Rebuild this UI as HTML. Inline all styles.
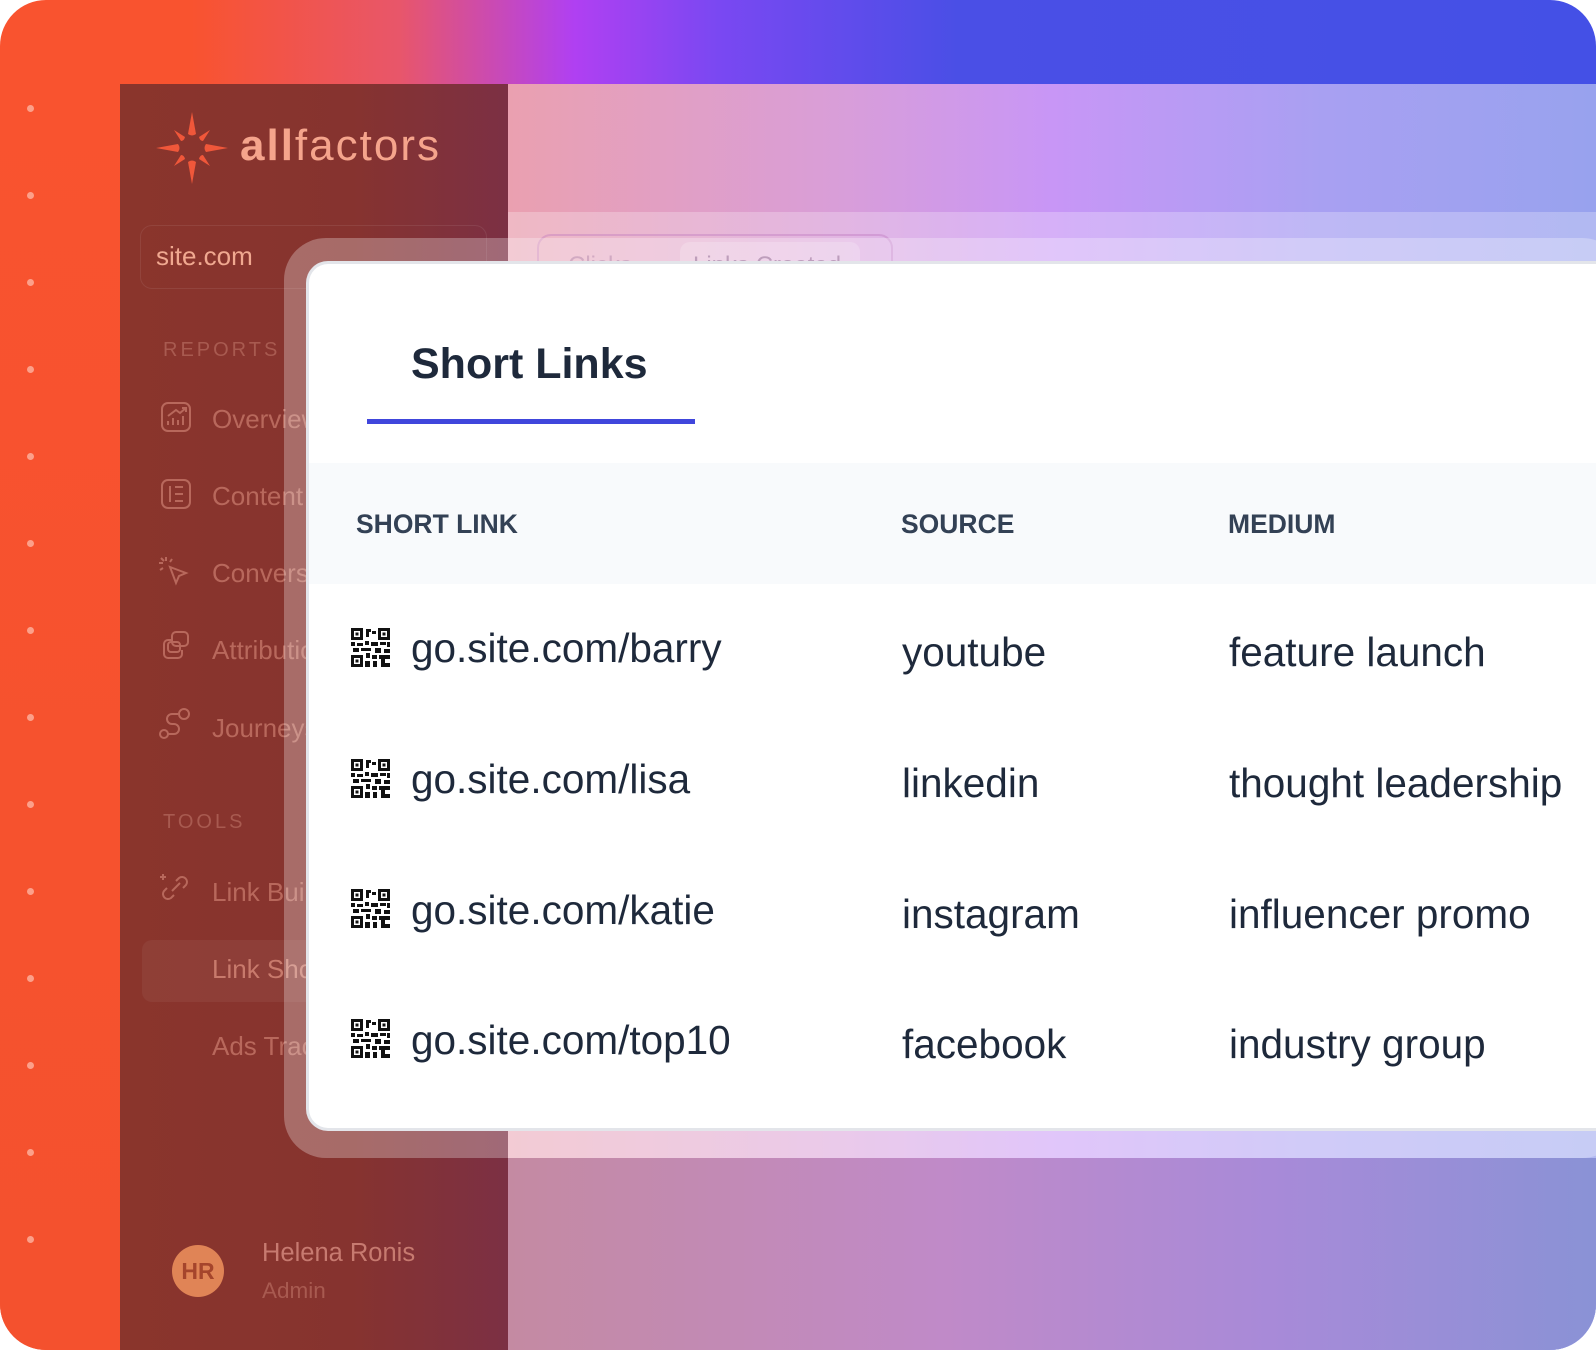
<!DOCTYPE html>
<html><head><meta charset="utf-8"><style>
*{margin:0;padding:0;box-sizing:border-box}
html,body{width:1596px;height:1350px;overflow:hidden;background:#fff}
body{font-family:"Liberation Sans",sans-serif;position:relative}
.outer{position:absolute;left:0;top:0;width:1596px;height:1350px;border-radius:46px;overflow:hidden;
background:linear-gradient(90deg,#f9532f 0%,#f9532f 12%,#e8566a 25%,#b040f2 36%,#7a48f2 45%,#4a4fe6 60%,#4450e6 100%)}
.leftstrip{position:absolute;left:0;top:84px;width:120px;height:1266px;background:linear-gradient(180deg,#f9532f,#f4512e)}
.dot{position:absolute;left:27px;width:7px;height:7px;border-radius:50%;background:#fca08a}
.main{position:absolute;left:508px;top:84px;width:1088px;height:1266px;
background:linear-gradient(90deg,#eaa0b0 0%,#d99ed8 30%,#c896f6 50%,#a8a0f2 75%,#98a2ee 100%)}
.main .band{position:absolute;left:0;top:128px;width:100%;height:1138px;background:rgba(255,255,255,0.25)}
.main .bot{position:absolute;left:0;top:1074px;width:100%;height:192px;
background:linear-gradient(90deg,#c48aa2 0%,#c08ac8 40%,#a88ad8 70%,#8a92d6 100%)}
.side{position:absolute;left:120px;top:84px;width:388px;height:1266px;
background:linear-gradient(90deg,#8a352c 0%,#86332f 60%,#7c3044 100%)}
.side .t{position:absolute;color:#b8685c;font-size:26px}
.frame{position:absolute;left:284px;top:238px;width:1340px;height:920px;border-radius:42px;background:rgba(255,255,255,0.28)}
.card{position:absolute;left:306px;top:261px;width:1320px;height:870px;border-radius:22px;background:#fff;border:3px solid #e3e5ea;border-right:none;overflow:hidden}
.c{position:absolute;color:#1e293b;white-space:nowrap}
.h{font-size:26.5px;color:#334155;font-weight:bold;top:-2px}
.r{font-size:40.5px}
</style></head><body>
<div class="outer">
 <div class="leftstrip"></div>
 <div class="dot" style="top:105px"></div><div class="dot" style="top:192px"></div><div class="dot" style="top:279px"></div><div class="dot" style="top:366px"></div><div class="dot" style="top:453px"></div><div class="dot" style="top:540px"></div><div class="dot" style="top:627px"></div><div class="dot" style="top:714px"></div><div class="dot" style="top:801px"></div><div class="dot" style="top:888px"></div><div class="dot" style="top:975px"></div><div class="dot" style="top:1062px"></div><div class="dot" style="top:1149px"></div><div class="dot" style="top:1236px"></div>
 <div class="main"><div class="band"></div><div class="bot"></div>
  <div style="position:absolute;left:29px;top:150px;width:356px;height:60px;border:2px solid rgba(190,120,190,0.4);border-radius:14px"></div>
  <div style="position:absolute;left:60px;top:168px;font-size:24px;color:rgba(150,90,140,0.5)">Clicks</div>
  <div style="position:absolute;left:172px;top:158px;width:180px;height:46px;border-radius:10px;background:rgba(255,255,255,0.2)"></div>
  <div style="position:absolute;left:185px;top:168px;font-size:24px;color:rgba(120,70,120,0.6)">Links Created</div>
 </div>
 <div class="side">
  <svg style="position:absolute;left:34px;top:26px" width="76" height="76" viewBox="0 0 76 76"><g fill="#f0573a">
   <path d="M38 2 L42 24 Q38 27 34 24Z"/><path d="M38 74 L42 52 Q38 49 34 52Z"/><path d="M2 38 L24 34 Q27 38 24 42Z"/><path d="M74 38 L52 34 Q49 38 52 42Z"/>
   <path d="M20 20 L31 27 Q30 31 27 31Z"/><path d="M56 20 L45 27 Q46 31 49 31Z"/><path d="M20 56 L31 49 Q30 45 27 45Z"/><path d="M56 56 L45 49 Q46 45 49 45Z"/></g></svg>
  <div style="position:absolute;left:120px;top:37px;font-size:44px;color:#f5a48c;letter-spacing:2px"><b>all</b>factors</div>
  <div style="position:absolute;left:20px;top:141px;width:347px;height:64px;border:1px solid rgba(255,255,255,0.08);border-radius:12px"></div>
  <div class="t" style="left:36px;top:157px;color:#f0a890">site.com</div>
  <div class="t" style="left:43px;top:255px;font-size:20px;letter-spacing:3px;color:#a85a50">REPORTS</div>
  <svg style="position:absolute;left:40px;top:317px" width="32" height="32" viewBox="0 0 32 32" fill="none" stroke="#b8685c" stroke-width="2"><rect x="2" y="2" width="28" height="28" rx="6"/><path d="M8 24v-4M13 24v-7M18 24v-5M23 24v-9M8 15l8-6 4 3 6-5M22 7h4v4"/></svg>
  <div class="t" style="left:92px;top:320px">Overview</div>
  <svg style="position:absolute;left:40px;top:394px" width="32" height="32" viewBox="0 0 32 32" fill="none" stroke="#b8685c" stroke-width="2"><rect x="2" y="2" width="28" height="28" rx="6"/><path d="M10 8v16M15 9h8M15 16h8M15 23h8"/></svg>
  <div class="t" style="left:92px;top:397px">Content</div>
  <svg style="position:absolute;left:36px;top:469px" width="36" height="36" viewBox="0 0 36 36" fill="none" stroke="#b8685c" stroke-width="2"><path d="M14 14l16 6-7 3-3 7z"/><path d="M10 4v4M3 10h4M5 5l3 3M16 6l-2 3M4 17l3-2"/></svg>
  <div class="t" style="left:92px;top:474px">Conversions</div>
  <svg style="position:absolute;left:40px;top:546px" width="32" height="32" viewBox="0 0 32 32" fill="none" stroke="#b8685c" stroke-width="2"><rect x="12" y="2" width="16" height="14" rx="4"/><path d="M12 10H8a4 4 0 0 0-4 4v10a4 4 0 0 0 4 4h10a4 4 0 0 0 4-4v-4"/><rect x="8" y="12" width="12" height="10" rx="3"/></svg>
  <div class="t" style="left:92px;top:551px">Attribution</div>
  <svg style="position:absolute;left:38px;top:622px" width="34" height="34" viewBox="0 0 34 34" fill="none" stroke="#b8685c" stroke-width="2"><circle cx="6" cy="28" r="4"/><circle cx="26" cy="8" r="5"/><path d="M10 28h6a5 5 0 0 0 0-10h-2a5 5 0 0 1 0-10h6"/></svg>
  <div class="t" style="left:92px;top:629px">Journeys</div>
  <div class="t" style="left:43px;top:727px;font-size:20px;letter-spacing:3px;color:#a85a50">TOOLS</div>
  <svg style="position:absolute;left:38px;top:787px" width="34" height="34" viewBox="0 0 34 34" fill="none" stroke="#b8685c" stroke-width="2"><path d="M2 6h6M5 3v6"/><path d="M14 20l8-8"/><path d="M18 10l3-3a5 5 0 0 1 7 7l-3 3"/><path d="M16 24l-3 3a5 5 0 0 1-7-7l3-3"/></svg>
  <div class="t" style="left:92px;top:793px">Link Builder</div>
  <div style="position:absolute;left:22px;top:856px;width:250px;height:62px;border-radius:10px;background:rgba(255,255,255,0.05)"></div>
  <div class="t" style="left:92px;top:870px;color:#c87a6c">Link Shortener</div>
  <div class="t" style="left:92px;top:947px">Ads Tracking</div>
  <div style="position:absolute;left:52px;top:1161px;width:52px;height:52px;border-radius:50%;background:#e08456;color:#a5452c;font-size:23px;font-weight:bold;text-align:center;line-height:52px">HR</div>
  <div class="t" style="left:142px;top:1155px;font-size:25.5px;color:#c77a70">Helena Ronis</div>
  <div class="t" style="left:142px;top:1194px;font-size:22.5px;color:#a85a50">Admin</div>
 </div>
 <div class="frame"></div>
 <div class="card">
  <div class="c" style="left:102px;top:76px;font-size:43px;font-weight:bold;color:#1e293b">Short Links</div>
  <div style="position:absolute;left:58px;top:155px;width:328px;height:5px;background:#4046dc"></div>
  <div style="position:absolute;left:0;top:199px;width:100%;height:121px;background:#f8fafc">
   <div class="c h" style="left:47px;top:46px">SHORT LINK</div>
   <div class="c h" style="left:592px;top:46px">SOURCE</div>
   <div class="c h" style="left:919px;top:46px">MEDIUM</div>
  </div>
 </div>
</div>
<svg width="0" height="0" style="position:absolute"><defs><g id="qr" fill="#111">
<path d="M0 0h12v12H0zM3 3v6h6V3zM4.5 4.5h3v3h-3z" fill-rule="evenodd"/>
<path d="M27 0h12v12H27zM30 3v6h6V3zM31.5 4.5h3v3h-3z" fill-rule="evenodd"/>
<path d="M0 27h12v12H0zM3 30v6h6v-6zM4.5 31.5h3v3h-3z" fill-rule="evenodd"/>
<path d="M15 1h5v3h-2v5h-3zM21 3h4v3h-4z"/>
<path d="M0 14h4v4H0zM6 15h6v3H6zM14 13h4v4h-4zM20 14h7v4h-7zM29 14h6v3h-6zM36 14h3v5h-3z"/>
<path d="M2 20h6v4H2zM10 20h10v3H10zM24 20h6v5h-6zM33 21h6v4h-6z"/>
<path d="M15 25h4v5h-4zM21 27h5v4h-5zM28 27h11v4H28zM14 33h5v6h-5zM22 33h4v6h-4zM30 31h4v8h-4zM34 35h5v4h-5z"/>
</g></defs></svg>
<div style="position:absolute;left:0;top:0">
 <svg style="position:absolute;left:351px;top:628px" width="39" height="39" viewBox="0 0 39 39"><use href="#qr"/></svg>
 <svg style="position:absolute;left:351px;top:759px" width="39" height="39" viewBox="0 0 39 39"><use href="#qr"/></svg>
 <svg style="position:absolute;left:351px;top:889px" width="39" height="39" viewBox="0 0 39 39"><use href="#qr"/></svg>
 <svg style="position:absolute;left:351px;top:1019px" width="39" height="39" viewBox="0 0 39 39"><use href="#qr"/></svg>
 <div class="c r" style="left:411px;top:625px">go.site.com/barry</div>
 <div class="c r" style="left:411px;top:756px">go.site.com/lisa</div>
 <div class="c r" style="left:411px;top:887px">go.site.com/katie</div>
 <div class="c r" style="left:411px;top:1017px">go.site.com/top10</div>
 <div class="c r" style="left:902px;top:629px">youtube</div>
 <div class="c r" style="left:902px;top:760px">linkedin</div>
 <div class="c r" style="left:902px;top:891px">instagram</div>
 <div class="c r" style="left:902px;top:1021px">facebook</div>
 <div class="c r" style="left:1229px;top:629px">feature launch</div>
 <div class="c r" style="left:1229px;top:760px">thought leadership</div>
 <div class="c r" style="left:1229px;top:891px">influencer promo</div>
 <div class="c r" style="left:1229px;top:1021px">industry group</div>
</div>
</body></html>
